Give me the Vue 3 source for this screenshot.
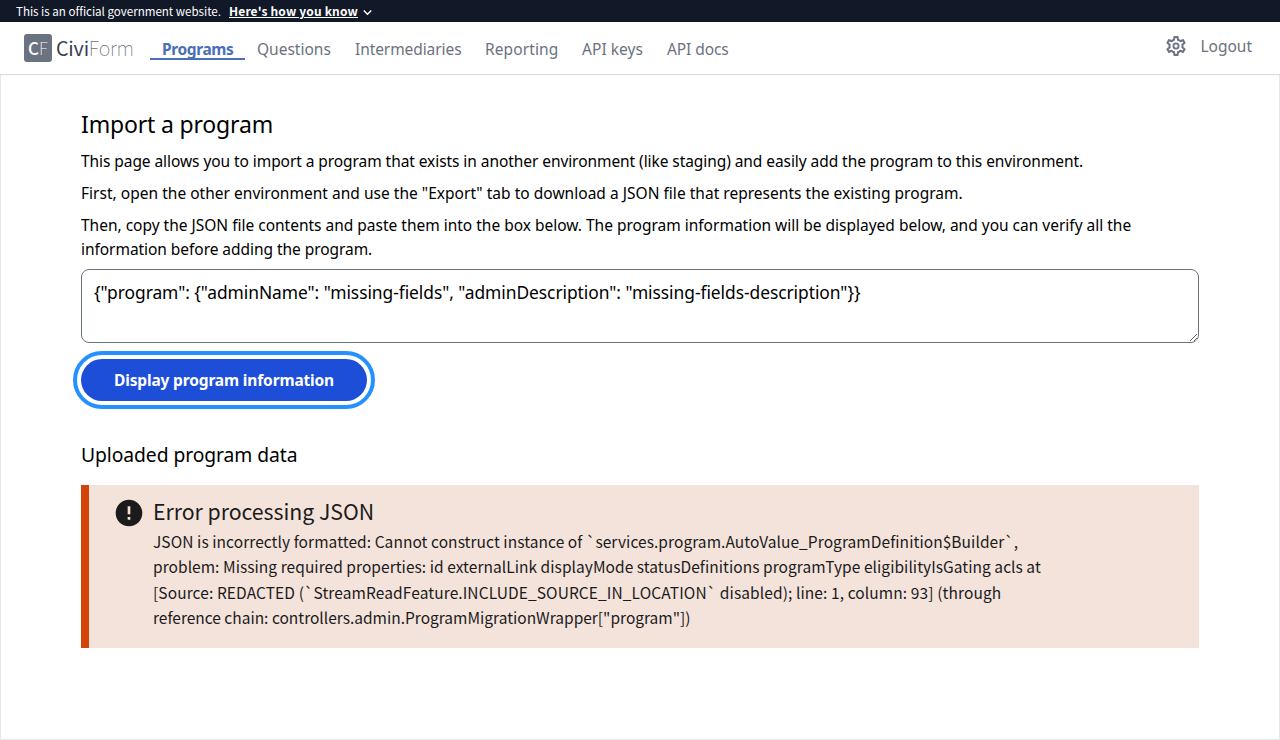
<script setup>
import { ref } from 'vue'

const navItems = [
  { label: 'Programs', cls: 'programs active' },
  { label: 'Questions', cls: 'questions' },
  { label: 'Intermediaries', cls: 'intermediaries' },
  { label: 'Reporting', cls: 'reporting' },
  { label: 'API keys', cls: 'keys' },
  { label: 'API docs', cls: 'docs' },
]
const json = ref('{"program": {"adminName": "missing-fields", "adminDescription": "missing-fields-description"}}')
</script>

<template>
  <div class="page">
    <div class="banner">
      <span class="gov">This is an official government website.</span>
      <a class="know">Here's how you know</a>
      <svg class="chevron" viewBox="0 0 24 24"><path d="M16.59 8.59 12 13.17 7.41 8.59 6 10l6 6 6-6z" fill="currentColor" /></svg>
    </div>

    <header class="header">
      <div class="logo">
        <span class="mark"><span class="mark-c">C</span><span class="mark-f">F</span></span>
        <span class="civi">Civi</span><span class="form">Form</span>
      </div>
      <nav class="nav">
        <a v-for="item in navItems" :key="item.label" class="nav-item" :class="item.cls">{{ item.label }}</a>
      </nav>
      <div class="account">
        <svg class="gear" viewBox="0 0 24 24" fill="currentColor">
          <path d="M19.43 12.98c.04-.32.07-.64.07-.98 0-.34-.03-.66-.07-.98l2.11-1.65c.19-.15.24-.42.12-.64l-2-3.46c-.09-.16-.26-.25-.44-.25-.06 0-.12.01-.17.03l-2.49 1c-.52-.4-1.08-.73-1.69-.98l-.38-2.65C14.46 2.18 14.25 2 14 2h-4c-.25 0-.46.18-.49.42l-.38 2.65c-.61.25-1.17.59-1.69.98l-2.49-1c-.06-.02-.12-.03-.18-.03-.17 0-.34.09-.43.25l-2 3.46c-.13.22-.07.49.12.64l2.11 1.65c-.04.32-.07.65-.07.98 0 .33.03.66.07.98l-2.11 1.65c-.19.15-.24.42-.12.64l2 3.46c.09.16.26.25.44.25.06 0 .12-.01.17-.03l2.49-1c.52.4 1.08.73 1.69.98l.38 2.65c.03.24.24.42.49.42h4c.25 0 .46-.18.49-.42l.38-2.65c.61-.25 1.17-.59 1.69-.98l2.49 1c.06.02.12.03.18.03.17 0 .34-.09.43-.25l2-3.46c.12-.22.07-.49-.12-.64l-2.11-1.65zm-1.98-1.71c.04.31.05.52.05.73 0 .21-.02.43-.05.73l-.14 1.13.89.7 1.08.84-.7 1.21-1.27-.51-1.04-.42-.9.68c-.43.32-.84.56-1.25.73l-1.06.43-.16 1.13-.2 1.35h-1.4l-.19-1.35-.16-1.13-1.06-.43c-.43-.18-.83-.41-1.23-.71l-.91-.7-1.06.43-1.27.51-.7-1.21 1.08-.84.89-.7-.14-1.13c-.03-.31-.05-.54-.05-.74s.02-.43.05-.73l.14-1.13-.89-.7-1.08-.84.7-1.21 1.27.51 1.04.42.9-.68c.43-.32.84-.56 1.25-.73l1.06-.43.16-1.13.2-1.35h1.39l.19 1.35.16 1.13 1.06.43c.43.18.83.41 1.23.71l.91.7 1.06-.43 1.27-.51.7 1.21-1.07.85-.89.7.14 1.13z" />
          <circle cx="12" cy="12" r="2.6" fill="none" stroke="currentColor" stroke-width="1.8" />
        </svg>
        <a>Logout</a>
      </div>
    </header>

    <main class="main">
      <h1>Import a program</h1>
      <p class="p1">This page allows you to import a program that exists in another environment (like staging) and easily add the program to this environment.</p>
      <p class="p2">First, open the other environment and use the "Export" tab to download a JSON file that represents the existing program.</p>
      <p class="p3">Then, copy the JSON file contents and paste them into the box below. The program information will be displayed below, and you can verify all the<br /><span class="p4">information before adding the program.</span></p>
      <textarea v-model="json" class="json" spellcheck="false"></textarea>
      <button class="submit">Display program information</button>
      <h2>Uploaded program data</h2>
      <section class="alert">
        <svg class="alert-icon" viewBox="0 0 24 24"><path d="M12 2C6.48 2 2 6.48 2 12s4.48 10 10 10 10-4.48 10-10S17.52 2 12 2zm1 15h-2v-2h2v2zm0-4h-2V7h2v6z" fill="currentColor" /></svg>
        <div>
          <h3>Error processing JSON</h3>
          <div class="alert-text">
            <div class="l1">JSON is incorrectly formatted: Cannot construct instance of `services.program.AutoValue_ProgramDefinition$Builder`,</div>
            <div class="l2">problem: Missing required properties: id externalLink displayMode statusDefinitions programType eligibilityIsGating acls at</div>
            <div class="l3">[Source: REDACTED (`StreamReadFeature.INCLUDE_SOURCE_IN_LOCATION` disabled); line: 1, column: 93] (through</div>
            <div>reference chain: controllers.admin.ProgramMigrationWrapper["program"])</div>
          </div>
        </div>
      </section>
    </main>
  </div>
</template>

<style>
body { background: #fff; }
</style>

<style scoped>
* { box-sizing: border-box; }
.page {
  height: 740px;
  display: flex;
  flex-direction: column;
  font: 15.5px/24px "Noto Sans", sans-serif;
  color: #000;
  white-space: nowrap;
}
.banner {
  height: 22px;
  flex: none;
  background: #111827;
  color: #fff;
  padding-left: 16px;
  display: flex;
  font: 11.6px/22px "Noto Sans CJK SC", sans-serif;
}
.gov { width: 213px; letter-spacing: -0.02px; }
.know { font-size: 12px; font-weight: 700; letter-spacing: 0.16px; text-decoration: underline; }
.chevron { width: 17px; height: 17px; margin: 4px 0 0 1px; }

.header {
  position: relative;
  height: 52px;
  flex: none;
  display: flex;
  align-items: flex-start;
  background: #fff;
  color: #6b7280;
  box-shadow: 0 1px 2px rgba(0, 0, 0, 0.08);
}
.logo { width: 150px; padding: 12px 0 0 24px; display: flex; font: 19.7px/27px "Noto Sans CJK SC", sans-serif; letter-spacing: -0.2px; }
.mark { width: 28px; height: 28px; margin-right: 4px; padding-left: 4px; border-radius: 3px; background: #6b7280; color: #fff; font-size: 17px; line-height: 28px; letter-spacing: 0; }
.mark-c { font-weight: 500; }
.mark-f { font-weight: 100; }
.civi { color: #374151; }
.form { font-weight: 100; }
.nav { display: flex; padding-top: 15px; }
.nav-item { height: 23px; padding-left: 12px; }
.programs { width: 95px; letter-spacing: -0.38px; }
.active { color: #4a6fb8; font-weight: 700; border-bottom: 2px solid #4a6fb8; }
.questions { width: 98px; }
.intermediaries { width: 130px; letter-spacing: -0.08px; }
.reporting { width: 97px; letter-spacing: 0.1px; }
.keys { width: 85px; letter-spacing: 0.05px; }
.docs { letter-spacing: -0.08px; }
.account { margin-left: auto; padding: 12px 28px 0 0; display: flex; gap: 12px; }
.gear { width: 24px; height: 24px; }

.main { flex: 1; border: 1px solid #e5e7eb; padding: 33px 80px 0; }
h1, h2, h3, p { margin: 0; font-weight: 400; }
h1 { font-size: 23px; line-height: 32px; letter-spacing: -0.17px; margin-bottom: 9px; }
p { margin-bottom: 8px; }
.p1 { letter-spacing: -0.07px; }
.p2 { letter-spacing: 0.022px; }
.p3 { letter-spacing: -0.007px; }
.p4 { letter-spacing: -0.05px; }
.json {
  display: block;
  width: 100%;
  height: 74px;
  margin: 0 0 16px;
  padding: 8px 12px;
  border: 1px solid #6b7280;
  border-radius: 8px;
  background: #fff;
  color: #000;
  font: 17.4px/28px "Noto Sans", sans-serif;
  letter-spacing: -0.05px;
  resize: vertical;
}
.submit {
  display: block;
  width: 286px;
  height: 42px;
  margin: 0 0 40px;
  padding: 0;
  border: 0;
  border-radius: 21px;
  background: #1d4ed8;
  color: #fff;
  font: 700 15.5px/24px "Noto Sans", sans-serif;
  letter-spacing: -0.15px;
  outline: 4px solid #2491ff;
  outline-offset: 4px;
}
h2 { font-size: 19.3px; line-height: 28px; letter-spacing: -0.07px; margin-bottom: 16px; }
.alert {
  height: 163px;
  display: flex;
  gap: 8px;
  border-left: 8px solid #d54309;
  background: #f4e3db;
  color: #1b1b1b;
  padding: 12px 24px 0;
  font: 15.5px/25.4px "Noto Sans CJK SC", sans-serif;
}
.alert-icon { width: 32px; height: 32px; flex: none; }
h3 { font-size: 21.3px; line-height: 28px; letter-spacing: -0.04px; padding-bottom: 4px; }
.l1 { letter-spacing: 0.068px; }
.l2 { letter-spacing: 0.05px; }
.l3 { letter-spacing: 0.1px; }
</style>
